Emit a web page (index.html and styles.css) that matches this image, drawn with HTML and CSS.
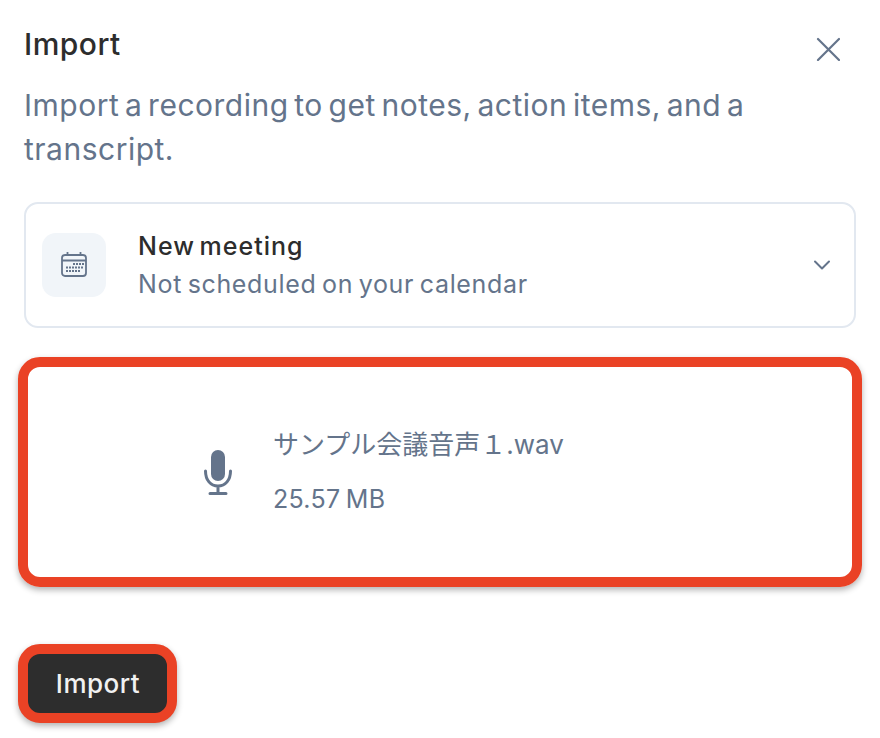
FILE: index.html
```html
<!DOCTYPE html>
<html lang="en">
<head>
    <meta charset="UTF-8">
    <meta name="viewport" content="width=device-width, initial-scale=1.0">
    <title>Import</title>
    <link rel="stylesheet" href="styles.css">
</head>
<body>
    <div class="dialog">
        <div class="dialog-head">
            <h1 class="title">Import</h1>
            <button class="close" aria-label="Close">
                <svg width="24" height="24" viewBox="0 0 24 24" fill="none" stroke="#64748b" stroke-width="2.2" stroke-linecap="round">
                    <path d="M2 2 L23 23 M23 2 L2 23"/>
                </svg>
            </button>
        </div>
        <p class="intro">Import a recording to get notes, action items, and a transcript.</p>

        <!-- Meeting picker -->
        <div class="meeting">
            <div class="meeting-icon">
                <svg width="28" height="28" viewBox="0 0 28 28" fill="none" stroke="#64748b" stroke-width="1.8">
                    <rect x="2" y="4" width="24" height="21" rx="3"/>
                    <path d="M2 9.5 H26 M7.5 1 V5 M20.5 1 V5"/>
                    <g class="cal-dots" fill="#64748b" stroke="none">
                        <rect x="13" y="12" width="2" height="2"/><rect x="16" y="12" width="2" height="2"/><rect x="19" y="12" width="2" height="2"/><rect x="22" y="12" width="2" height="2"/>
                        <rect x="6" y="15.5" width="2" height="2"/><rect x="9" y="15.5" width="2" height="2"/><rect x="12" y="15.5" width="2" height="2"/><rect x="15" y="15.5" width="2" height="2"/><rect x="18" y="15.5" width="2" height="2"/><rect x="21" y="15.5" width="2" height="2"/>
                        <rect x="6" y="19" width="2" height="2"/><rect x="9" y="19" width="2" height="2"/><rect x="12" y="19" width="2" height="2"/><rect x="15" y="19" width="2" height="2"/><rect x="18" y="19" width="2" height="2"/>
                    </g>
                </svg>
            </div>
            <div class="meeting-text">
                <div class="meeting-name">New meeting</div>
                <div class="meeting-sub">Not scheduled on your calendar</div>
            </div>
            <svg class="chevron" width="18" height="12" viewBox="0 0 18 12" fill="none" stroke="#64748b" stroke-width="2" stroke-linecap="round" stroke-linejoin="round">
                <path d="M2 2.5 L9 9.5 L16 2.5"/>
            </svg>
        </div>

        <!-- Selected file -->
        <div class="file-box">
            <svg class="mic" width="28" height="46" viewBox="0 0 28 46" fill="none">
                <rect x="7" y="0" width="14" height="31" rx="7" fill="#64748b"/>
                <path d="M1.5 21 C1.5 30 6.5 36 14 36 C21.5 36 26.5 30 26.5 21 M14 36 V43 M6 43.5 H22" stroke="#64748b" stroke-width="3" stroke-linecap="round"/>
            </svg>
            <div class="file-text">
                <div class="file-name">サンプル会議音声１.wav</div>
                <div class="file-size">25.57 MB</div>
            </div>
        </div>

        <button class="import-btn">Import</button>
    </div>
</body>
</html>
```

FILE: styles.css
```css
body {
    margin: 0;
    padding: 0;
    background-color: white;
    font-family: "Inter", "Noto Sans CJK JP", sans-serif;
    color: #2d2d2d;
}

.dialog {
    width: 880px;
    height: 738px;
    box-sizing: border-box;
    padding: 25px 18px 0;
    overflow: hidden;
}

.dialog-head {
    display: flex;
    justify-content: space-between;
    align-items: flex-start;
    padding: 0 22px 0 6px;
}

.title {
    margin: 0;
    font-size: 30px;
    font-weight: 500;
    line-height: 38px;
    letter-spacing: 0.5px;
}

.close {
    border: none;
    background: none;
    padding: 0;
    margin-top: 12px;
    display: flex;
}

.intro {
    margin: 20px 0 0;
    padding: 0 6px;
    width: 760px;
    font-size: 30px;
    line-height: 44px;
    color: #64748b;
    letter-spacing: 0.5px;
    word-spacing: -3.2px;
}

.meeting {
    display: flex;
    align-items: center;
    margin: 31px 6px 0;
    height: 126px;
    box-sizing: border-box;
    padding: 0 23px 0 16px;
    border: 2px solid #e2e8f0;
    border-radius: 14px;
}

.meeting-icon {
    width: 64px;
    height: 64px;
    border-radius: 14px;
    background-color: #f1f5f9;
    display: flex;
    align-items: center;
    justify-content: center;
    flex-shrink: 0;
}

.meeting-text {
    flex: 1;
    margin-left: 32px;
}

.meeting-name {
    font-size: 25px;
    font-weight: 500;
    line-height: 38px;
    letter-spacing: 1px;
    word-spacing: -3px;
}

.meeting-sub {
    font-size: 25px;
    line-height: 38px;
    color: #64748b;
    letter-spacing: 0.65px;
    word-spacing: -2px;
}

.file-box {
    display: flex;
    align-items: center;
    margin-top: 29px;
    height: 230px;
    box-sizing: border-box;
    padding-left: 176px;
    border: 10px solid #ea4225;
    border-radius: 22px;
    box-shadow: 0 3px 6px rgba(0, 0, 0, 0.3);
}

.mic {
    margin-top: 2px;
}

.file-text {
    margin-left: 41px;
    color: #64748b;
}

.file-name {
    font-size: 26px;
    line-height: 36px;
}

.file-size {
    margin-top: 18px;
    font-size: 25px;
    line-height: 36px;
    letter-spacing: 0.3px;
    word-spacing: -2px;
}

.import-btn {
    display: block;
    margin-top: 57px;
    width: 159px;
    height: 79px;
    box-sizing: border-box;
    border: 10px solid #ea4225;
    border-radius: 22px;
    background-color: #2d2d2d;
    box-shadow: 0 3px 6px rgba(0, 0, 0, 0.3);
    color: #f1f1f1;
    font-family: inherit;
    font-size: 26px;
    font-weight: 500;
    letter-spacing: 0.5px;
    padding: 0 0 0 1px;
}
```
